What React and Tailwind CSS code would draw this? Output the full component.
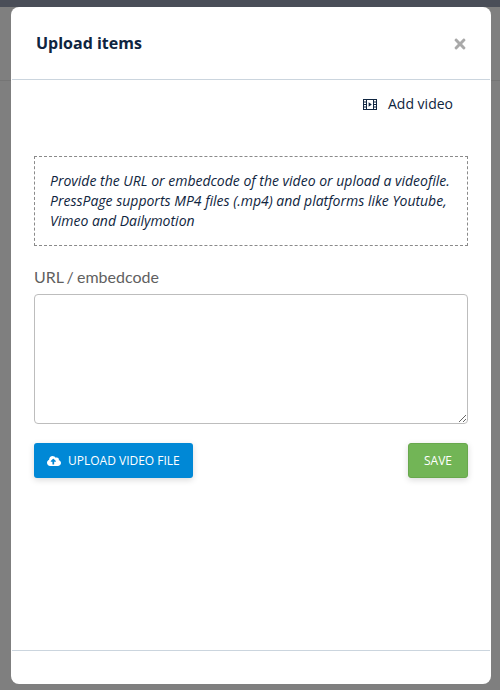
import React from "react";
import { FaCloudUploadAlt, FaTimes } from "react-icons/fa";

function VideoIcon() {
  return (
    <svg width="14" height="11" viewBox="0 0 14 11" className="block" fill="#0f2540">
      <path d="M0 0h14v11H0zM1 1v1.5h2V1zm0 2.6v1.3h2V3.6zm0 2.5v1.3h2V6.1zm0 2.5V10h2V8.6zM11 1v1.5h2V1zm0 2.6v1.3h2V3.6zm0 2.5v1.3h2V6.1zm0 2.5V10h2V8.6zM4 1v9h6V1z" fillRule="evenodd" />
      <path d="M5.6 3.2 8.8 5.5 5.6 7.8z" />
    </svg>
  );
}

export default function App() {
  return (
    <div className="relative h-[690px] w-[500px] overflow-hidden bg-[#7f7f7f] font-['Open_Sans',sans-serif]">
      <div className="h-[7px] bg-[#4a4e58]"></div>
      {/* faint page line behind the overlay */}
      <div className="absolute left-0 right-0 top-[80px] h-px bg-[#757575]"></div>

      <div className="relative mx-[11px] flex h-[677px] w-[480px] flex-col rounded-[8px] bg-white">
        <div className="mx-px flex h-[73px] items-start justify-between border-b border-[#cbd5de] pl-[24px] pr-[22px]">
          <h2 className="mt-[25px] text-[16px] font-bold leading-[22px] text-[#0f2540]">Upload items</h2>
          <FaTimes className="mt-[29px] text-[16px] text-[#a9a9a9]" />
        </div>

        <div className="flex flex-1 flex-col px-[23px]">
          <div className="mt-[14px] flex items-center justify-end pr-[15px]">
            <VideoIcon />
            <span className="ml-[11px] text-[14px] leading-[20px] text-[#0f2540]">Add video</span>
          </div>

          <div className="mt-[42px] h-[90px] border border-dashed border-[#8a8a8a] px-[15px] pt-[14px] text-[14px] italic leading-[20px] text-[#0f2540]">
            <p>Provide the URL or embedcode of the video or upload a videofile.</p>
            <p>PressPage supports MP4 files (.mp4) and platforms like Youtube,</p>
            <p>Vimeo and Dailymotion</p>
          </div>

          <label className="mt-[20px] block font-['Lato',sans-serif] text-[16px] leading-[22px] text-[#5f5f5f] [word-spacing:-1px]">URL / embedcode</label>
          <textarea className="mt-[6px] block h-[130px] w-full rounded-[4px] border border-[#bdbdbd] bg-white"></textarea>

          <div className="mt-[19px] flex items-start justify-between">
            <button className="flex h-[35px] w-[159px] items-center rounded-[3px] bg-[#0088d6] pl-[13px] text-[12px] font-normal text-white shadow-[0_2px_6px_rgba(0,0,0,0.15)]">
              <FaCloudUploadAlt className="text-[14px]" />
              <span className="ml-[7px]">UPLOAD VIDEO FILE</span>
            </button>
            <button className="h-[35px] w-[60px] rounded-[3px] border border-[#68a84d] bg-[#72b556] text-center text-[12px] font-normal text-white shadow-[0_2px_6px_rgba(0,0,0,0.15)]">
              SAVE
            </button>
          </div>
        </div>

        <div className="mx-px mb-[33px] h-px bg-[#cbd5de]"></div>
      </div>
    </div>
  );
}
